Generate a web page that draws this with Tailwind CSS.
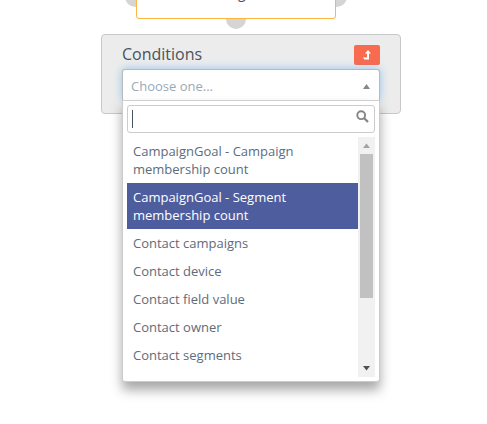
<!DOCTYPE html>
<html lang="en">
<head>
  <meta charset="UTF-8" />
  <meta name="viewport" content="width=device-width, initial-scale=1.0"/>
  <title>Campaign Builder</title>
  <script src="https://cdn.jsdelivr.net/npm/@tailwindcss/browser@4"></script>
</head>
<body class="relative bg-white w-[487px] h-[424px] overflow-hidden font-['Open_Sans',sans-serif] text-[13px] text-[#5d6c7c]">
  <!-- campaign event node with its anchors -->
  <div class="absolute left-[125px] -top-[14px] size-[21px] rounded-full bg-[#d5d5d5]"></div>
  <div class="absolute left-[326px] -top-[14px] size-[21px] rounded-full bg-[#d5d5d5]"></div>
  <div class="absolute left-[226px] top-[9px] size-5 rounded-full bg-[#d5d5d5]"></div>
  <div class="absolute left-[136px] -top-[31px] w-[200px] h-[50px] rounded-[3px] border border-[#fdb644] bg-white">
    <span class="absolute left-[101px] top-[13px] text-[14px] leading-5 text-[#47535f]">g</span>
  </div>

  <!-- conditions panel -->
  <div class="absolute left-[101px] top-[34px] w-[300px] h-20 rounded-[4px] border border-[#c8c8c8] bg-[#ececec] px-5 pt-2">
    <div class="flex items-start justify-between">
      <h3 class="text-[16px] leading-[22px] text-[#47535f]">Conditions</h3>
      <button class="flex items-center justify-center w-[26px] h-5 mt-0.5 rounded-[2px] bg-[#f86b4f]">
        <svg class="block w-[8px] h-[10px]" viewBox="0 0 8 10" fill="#fff">
          <path d="M5 0 8 3.6H6V9.4H1.4L0 7.4H4V3.6H2Z"/>
        </svg>
      </button>
    </div>
  </div>

  <!-- open select -->
  <div class="absolute left-[122px] top-[69px] w-[258px]">
    <div class="flex items-center justify-between h-[31px] pl-2 pr-[9px] rounded-t-[3px] border border-b-0 border-[#b9b9b9] bg-white shadow-[0_0_8px_rgba(82,168,236,0.6)]">
      <span class="leading-[18px] text-[#9aa9b6] mt-0.5">Choose one...</span>
      <svg class="block w-[7px] h-[5px] mt-[3px]" viewBox="0 0 7 5" fill="#888"><path d="M3.5 0 7 5H0Z"/></svg>
    </div>
    <div class="relative h-[282px] px-1 pt-1 rounded-b-[3px] border border-t-[#d0d0d0] border-[#ccc] bg-white shadow-[0_8px_12px_rgba(0,0,0,0.35)]">
      <div class="flex justify-between h-7 pl-1 pr-[5px] pt-1 rounded-[3px] border border-[#ccc]">
        <div class="w-px h-[18px] bg-[#47535f]"></div>
        <svg class="block size-[13px]" viewBox="0 0 13 13" fill="none" stroke="#858585">
          <circle cx="5.2" cy="5.2" r="3.9" stroke-width="1.9"/>
          <path d="M8 8 12 12" stroke-width="2.3"/>
        </svg>
      </div>
      <div class="flex mt-1 h-[240px]">
        <ul class="flex-1 leading-[18px]">
          <li class="px-1.5 py-[5px]">CampaignGoal - Campaign<br>membership count</li>
          <li class="px-1.5 py-[5px] bg-[#4e5d9d] text-white">CampaignGoal - Segment<br>membership count</li>
          <li class="px-1.5 py-[5px]">Contact campaigns</li>
          <li class="px-1.5 py-[5px]">Contact device</li>
          <li class="px-1.5 py-[5px]">Contact field value</li>
          <li class="px-1.5 py-[5px]">Contact owner</li>
          <li class="px-1.5 py-[5px]">Contact segments</li>
        </ul>
        <div class="flex flex-col items-center w-[17px] bg-[#f1f1f1]">
          <svg class="block w-[17px] h-[17px]" viewBox="0 0 17 17" fill="#a3a3a3"><path d="M8.5 6.5 12 11H5Z"/></svg>
          <div class="w-[13px] h-36 bg-[#c1c1c1]"></div>
          <svg class="block w-[17px] h-[17px] mt-auto" viewBox="0 0 17 17" fill="#505050"><path d="M5 6H12L8.5 10.5Z"/></svg>
        </div>
      </div>
    </div>
  </div>
</body>
</html>
